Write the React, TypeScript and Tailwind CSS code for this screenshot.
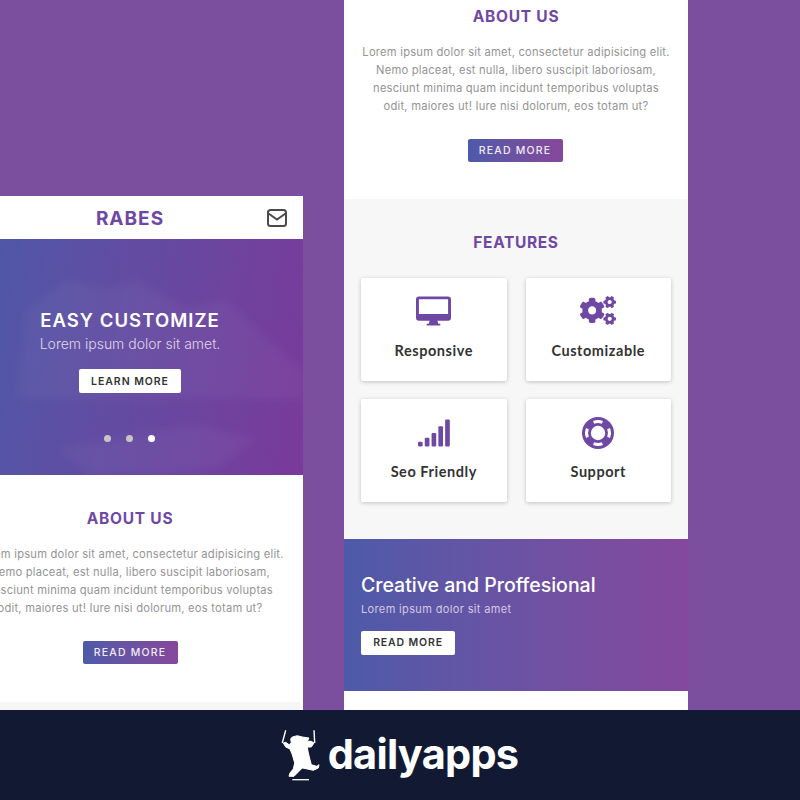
import React from "react";
import { FaCogs } from "react-icons/fa";

function ReadMore({ nudge }: { nudge?: boolean }) {
  return (
    <button className={`${nudge ? "-translate-x-px" : ""} h-[23px] w-[95px] rounded-[2px] bg-gradient-to-r from-[#4d5aa9] to-[#85479b] text-[10.5px] font-medium tracking-[1.2px] text-[#f0eaf5] font-['Inter',sans-serif]`}>
      READ MORE
    </button>
  );
}

function About({ nudge }: { nudge?: boolean }) {
  return (
    <section className="flex flex-col items-center font-['Inter',sans-serif]">
      <h2 className="text-[15.5px] leading-5 font-bold tracking-[0.75px] text-[#6f48a3]">ABOUT US</h2>
      <p className="mt-[16px] whitespace-nowrap text-center text-[11.2px] leading-[18px] tracking-[0.22px] text-[#949494]">
        Lorem ipsum dolor sit amet, consectetur adipisicing elit.
        <br />
        Nemo placeat, est nulla, libero suscipit laboriosam,
        <br />
        nesciunt minima quam incidunt temporibus voluptas
        <br />
        odit, maiores ut! Iure nisi dolorum, eos totam ut?
      </p>
      <div className="mt-[21px]">
        <ReadMore nudge={nudge} />
      </div>
    </section>
  );
}

function MailIcon() {
  return (
    <svg viewBox="0 0 20 18" className="absolute right-[16px] top-[13px] h-[18px] w-5 fill-none stroke-[#4a4a4a] stroke-2">
      <rect x="1" y="1" width="18" height="16" rx="2.5" />
      <path d="M1.5 4.5L10 10.5 18.5 4.5" />
    </svg>
  );
}

function DesktopIcon() {
  return (
    <svg viewBox="0 0 36 30" className="h-[30px] w-[35px] fill-[#6f48a3]">
      <path
        fillRule="evenodd"
        d="M3 0h30a3 3 0 0 1 3 3v19a3 3 0 0 1-3 3H22l1 3h2v2H11v-2h2l1-3H3a3 3 0 0 1-3-3V3a3 3 0 0 1 3-3zm0 3v15h30V3z"
      />
    </svg>
  );
}

function SignalIcon() {
  return (
    <svg viewBox="0 0 33 28" className="mt-[2px] h-7 w-8 fill-[#6f48a3]">
      <rect x="0" y="23" width="4.8" height="5" rx="1.4" />
      <rect x="7" y="19" width="4.8" height="9" rx="1" />
      <rect x="14" y="14" width="4.8" height="14" rx="1" />
      <rect x="21" y="7" width="4.8" height="21" rx="1" />
      <rect x="28" y="0" width="4.8" height="28" rx="1" />
    </svg>
  );
}

function RingIcon() {
  return (
    <svg viewBox="0 0 32 32" className="mt-[2px] h-8 w-8">
      <circle cx="16" cy="16" r="16" fill="#6f48a3" />
      <circle cx="16" cy="16" r="7.2" fill="#fff" />
      <path
        d="M11.6 5.4a11.5 11.5 0 0 1 8.8 0M26.6 11.6a11.5 11.5 0 0 1 0 8.8M20.4 26.6a11.5 11.5 0 0 1-8.8 0M5.4 20.4a11.5 11.5 0 0 1 0-8.8"
        fill="none"
        stroke="#fff"
        strokeWidth="3"
      />
    </svg>
  );
}

function Card({ icon, label }: { icon: React.ReactNode; label: string }) {
  return (
    <div className="flex h-[103px] flex-col items-center rounded-[2px] bg-white shadow-[0_1px_4px_rgba(0,0,0,0.22)]">
      <div className="flex h-[61px] items-center justify-center pt-1">{icon}</div>
      <div className="mt-[2px] text-[14.5px] font-bold leading-5 tracking-[0.55px] text-[#333] font-['Lato',sans-serif]">{label}</div>
    </div>
  );
}

function Logo() {
  return (
    <svg viewBox="0 0 40 54" className="h-[54px] w-10 fill-white">
      <path
        stroke="#fff"
        strokeWidth="1"
        strokeLinejoin="round"
        d="M12.3 9L17.3 7.7 22.3 9 29 10 27.3 13.3 31.3 13.3 34 15 31.3 19 27.3 19 28.3 25 30 31.7 31.3 36.7 36.7 38.3 39 36.7 38.3 40 33.3 42.3 27.3 41 22.3 40 19 43.3 14 48.3 9 48.3 10 45 13.3 41 14.7 35 12.3 26.7 10 21 5.7 19 3.3 15 5.7 14.3 9 16.7 11.3 15 10.7 11Z"
      />
      <path d="M5.7 2.3L2.3 15M34 2.3L34.7 15" stroke="#fff" strokeWidth="1.4" fill="none" />
      <path d="M12.3 51.7H29" stroke="#fff" strokeWidth="1.3" fill="none" />
    </svg>
  );
}

export default function App() {
  return (
    <div className="flex h-[800px] w-[800px] flex-col overflow-hidden bg-[#7b4e9e]">
      <main className="flex h-[710px] shrink-0">
        {/* left phone */}
        <div className="ml-[-43px] mt-[196px] flex h-[514px] w-[346px] shrink-0 flex-col bg-white">
          <header className="relative flex h-[43px] shrink-0 items-center justify-center pt-[3px]">
            <span className="text-[19px] font-bold tracking-[1px] text-[#6f48a3] font-['Inter',sans-serif]">RABES</span>
            <MailIcon />
          </header>
          <div className="relative flex h-[236px] shrink-0 flex-col items-center overflow-hidden bg-[linear-gradient(100deg,#4a5aa8_0%,#5f4ea3_40%,#7a3a9a_100%)] pt-[69px] font-['Inter',sans-serif]">
            <svg viewBox="0 0 346 236" className="absolute inset-0 h-full w-full fill-white/[0.04] blur-[5px]">
              <path d="M70 70l40-30 40 10 30-10 50 30 40-10 40 40 36 30v30H60z" />
              <path d="M100 210l140-25 60 15-40 30-120 10z" />
            </svg>
            <div className="relative flex flex-col items-center">
              <h1 className="text-[18.5px] font-semibold leading-6 tracking-[1.05px] text-white">EASY CUSTOMIZE</h1>
              <p className="mt-[2px] text-[14px] font-light leading-5 text-[#e0d5ea]">Lorem ipsum dolor sit amet.</p>
              <button className="mt-[15px] h-6 w-[102px] rounded-[2px] bg-white pt-px text-[10.5px] font-semibold tracking-[0.95px] text-[#333]">LEARN MORE</button>
              <div className="mt-[42px] flex gap-[15px]">
                <span className="size-[7px] rounded-full bg-[#c9c5c5]" />
                <span className="size-[7px] rounded-full bg-[#c9c5c5]" />
                <span className="size-[7px] rounded-full bg-white" />
              </div>
            </div>
          </div>
          <div className="flex-1 overflow-hidden pt-[34px]">
            <About />
          </div>
          <div className="mr-[3px] h-[8px] shrink-0 bg-[#f6f6f6]" />
        </div>

        {/* right phone */}
        <div className="ml-[41px] flex h-[710px] w-[344px] shrink-0 flex-col bg-white">
          <div className="h-[199px] shrink-0 pt-[7px]">
            <About nudge />
          </div>
          <section className="h-[340px] shrink-0 bg-[#f7f7f7] px-[17px] pt-[34px]">
            <h2 className="text-center text-[15.5px] font-bold leading-5 tracking-[0.65px] text-[#6f48a3] font-['Inter',sans-serif]">FEATURES</h2>
            <div className="mt-[25px] grid grid-cols-2 gap-x-[19px] gap-y-[18px]">
              <Card icon={<DesktopIcon />} label="Responsive" />
              <Card icon={<FaCogs className="h-[31px] w-[36px] text-[#6f48a3]" />} label="Customizable" />
              <Card icon={<SignalIcon />} label="Seo Friendly" />
              <Card icon={<RingIcon />} label="Support" />
            </div>
          </section>
          <section className="flex h-[152px] shrink-0 flex-col items-start justify-center bg-gradient-to-r from-[#4d5aa9] to-[#84489d] px-[17px] pb-[2px] font-['Inter',sans-serif]">
            <h2 className="text-[19.5px] font-medium leading-6 text-white">Creative and Proffesional</h2>
            <p className="mt-[4px] text-[11px] leading-4 tracking-[0.36px] text-[#d6c8e4]">Lorem ipsum dolor sit amet</p>
            <button className="mt-[14px] h-6 w-[94px] rounded-[2px] bg-white text-[10.5px] font-semibold tracking-[0.85px] text-[#333]">READ MORE</button>
          </section>
          <div className="flex-1 bg-white" />
        </div>
      </main>
      <footer className="flex h-[90px] shrink-0 items-center justify-center gap-[8px] bg-[#121a33] pr-[2px]">
        <Logo />
        <span className="text-[41.5px] font-bold leading-none tracking-[-0.75px] text-white font-['Inter',sans-serif]">dailyapps</span>
      </footer>
    </div>
  );
}
